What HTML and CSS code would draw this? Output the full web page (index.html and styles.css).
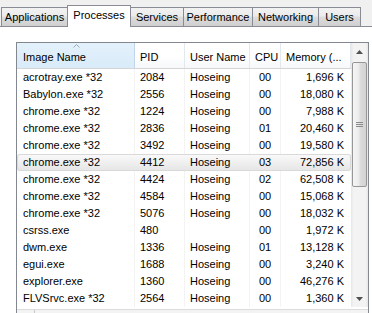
FILE: index.html
```html
<!DOCTYPE html>
<html>
<head>
    <meta charset="utf-8">
    <title>Windows Task Manager - Processes</title>
    <link rel="stylesheet" href="styles.css">
</head>
<body>

    <div class="tabs">
        <div class="tab t-app">Applications</div>
        <div class="tab t-proc active">Processes</div>
        <div class="tab t-svc">Services</div>
        <div class="tab t-perf">Performance</div>
        <div class="tab t-net">Networking</div>
        <div class="tab t-usr">Users</div>
    </div>

    <div class="list">
        <div class="main">
            <div class="cols">
                <div class="head">
                    <div class="hcell sorted">
                        <svg class="sort" width="7" height="4" viewBox="0 0 7 4"><path d="M0.5 3.5 L3.5 0.5 L6.5 3.5" fill="none" stroke="#9aabbd" stroke-width="1"/></svg>
                        Image Name
                    </div>
                    <div class="hcell">PID</div>
                    <div class="hcell">User Name</div>
                    <div class="hcell">CPU</div>
                    <div class="hcell">Memory (...</div>
                </div>

                <div class="row"><span>acrotray.exe *32</span><span>2084</span><span>Hoseing</span><span class="cpu">00</span><span class="mem">1,696 K</span></div>
                <div class="row"><span>Babylon.exe *32</span><span>2556</span><span>Hoseing</span><span class="cpu">00</span><span class="mem">18,080 K</span></div>
                <div class="row"><span>chrome.exe *32</span><span>1224</span><span>Hoseing</span><span class="cpu">00</span><span class="mem">7,988 K</span></div>
                <div class="row"><span>chrome.exe *32</span><span>2836</span><span>Hoseing</span><span class="cpu">01</span><span class="mem">20,460 K</span></div>
                <div class="row"><span>chrome.exe *32</span><span>3492</span><span>Hoseing</span><span class="cpu">00</span><span class="mem">19,580 K</span></div>
                <div class="row sel"><span>chrome.exe *32</span><span>4412</span><span>Hoseing</span><span class="cpu">03</span><span class="mem">72,856 K</span></div>
                <div class="row"><span>chrome.exe *32</span><span>4424</span><span>Hoseing</span><span class="cpu">02</span><span class="mem">62,508 K</span></div>
                <div class="row"><span>chrome.exe *32</span><span>4584</span><span>Hoseing</span><span class="cpu">00</span><span class="mem">15,068 K</span></div>
                <div class="row"><span>chrome.exe *32</span><span>5076</span><span>Hoseing</span><span class="cpu">00</span><span class="mem">18,032 K</span></div>
                <div class="row"><span>csrss.exe</span><span>480</span><span></span><span class="cpu">00</span><span class="mem">1,972 K</span></div>
                <div class="row"><span>dwm.exe</span><span>1336</span><span>Hoseing</span><span class="cpu">01</span><span class="mem">13,128 K</span></div>
                <div class="row"><span>egui.exe</span><span>1688</span><span>Hoseing</span><span class="cpu">00</span><span class="mem">3,240 K</span></div>
                <div class="row"><span>explorer.exe</span><span>1360</span><span>Hoseing</span><span class="cpu">00</span><span class="mem">46,276 K</span></div>
                <div class="row"><span>FLVSrvc.exe *32</span><span>2564</span><span>Hoseing</span><span class="cpu">00</span><span class="mem">1,360 K</span></div>
            </div>

            <div class="vscroll">
                <div class="sbtn">
                    <svg width="7" height="4" viewBox="0 0 7 4"><path d="M0 4 L3.5 0 L7 4 Z" fill="#505050"/></svg>
                </div>
                <div class="thumb">
                    <svg width="7" height="7" viewBox="0 0 7 7"><path d="M0 1.5 H7 M0 3.5 H7 M0 5.5 H7" stroke="#8a8a8a" stroke-width="1"/></svg>
                </div>
                <div class="sbtn down">
                    <svg width="7" height="4" viewBox="0 0 7 4"><path d="M0 0 L3.5 4 L7 0 Z" fill="#505050"/></svg>
                </div>
            </div>
        </div>

        <div class="hscroll">
            <div class="hbtn"></div>
        </div>
    </div>

</body>
</html>
```

FILE: styles.css
```css
*{
    box-sizing: border-box;
}
body{
    margin: 0;
    width: 372px;
    height: 313px;
    overflow: hidden;
    background-color: #fff;
    font-family: "Liberation Sans", Arial, sans-serif;
    font-size: 11px;
    color: #000;
}
/* tab strip */
.tabs{
    display: flex;
    align-items: flex-end;
    height: 27px;
    padding-left: 1px;
    background-color: #f0f0f0;
    border-bottom: solid 1px #898c95;
}
.tab{
    height: 19px;
    margin-left: -1px;
    border: solid 1px #898c95;
    border-bottom: none;
    background: linear-gradient(#f2f2f2, #ebebeb 45%, #dddddd 50%, #cfcfcf);
    text-align: center;
    line-height: 18px;
    white-space: nowrap;
}
.tab.active{
    height: 22px;
    margin-bottom: -1px;
    background: #fff;
    line-height: 19px;
    position: relative;
    z-index: 1;
}
.t-app{ width: 67px; margin-left: 0; }
.t-proc{ width: 64px; }
.t-svc{ width: 54px; }
.t-perf{ width: 70px; }
.t-net{ width: 67px; }
.t-usr{ width: 43px; }

/* process list */
.list{
    margin: 15px 0 0 16px;
    width: 353px;
    height: 271px;
    border: solid 1px #828790;
    border-bottom: none;
    display: flex;
    flex-direction: column;
    overflow: hidden;
}
.main{
    display: flex;
    flex: none;
}
.cols{
    width: 334px;
}
.head,
.row{
    display: grid;
    grid-template-columns: 118px 50px 65px 31px 70px;
}
.head{
    height: 26px;
    border-bottom: solid 1px #d5d5d5;
    background: linear-gradient(#fff, #fff 50%, #f7f8fa);
}
.hcell{
    padding: 6px 0 0 5px;
    line-height: 17px;
    border-right: solid 1px #e3e8ee;
    white-space: nowrap;
    overflow: hidden;
}
.hcell.sorted{
    padding-left: 6px;
    background: linear-gradient(#e3f1fb, #d9ebf9);
    border-right-color: #c1d6ea;
    position: relative;
}
.sort{
    position: absolute;
    top: 1px;
    left: 56px;
}
.row{
    height: 17px;
    line-height: 17px;
}
.row span{
    padding-left: 5px;
    border-right: solid 1px #f3f3f3;
    white-space: nowrap;
    overflow: hidden;
}
.row span:first-child{
    padding-left: 6px;
}
.row .cpu{
    padding-left: 9px;
}
.row .mem{
    text-align: right;
    padding-right: 7px;
    border-right: none;
}
.row.sel{
    background: linear-gradient(#fafafa, #e5e5e5);
    box-shadow: inset 0 0 0 1px #d9d9d9;
    border-radius: 3px;
}
.row.sel span{
    border-right-color: transparent;
}

/* scroll bars */
.vscroll{
    width: 17px;
    height: 264px;
    display: flex;
    flex-direction: column;
    background: linear-gradient(to right, #e6e6e6, #f3f3f3 15%, #f3f3f3 85%, #e6e6e6);
}
.sbtn{
    height: 17px;
    display: flex;
    align-items: center;
    justify-content: center;
}
.sbtn.down{
    margin-top: auto;
}
.thumb{
    margin: 2px 1px 0 1px;
    height: 125px;
    border: solid 1px #979797;
    border-radius: 2px;
    background: linear-gradient(to right, #f6f6f6, #ebebeb 45%, #dcdcdc 55%, #d3d3d3);
    display: flex;
    align-items: center;
    justify-content: center;
}
.hscroll{
    flex: 1;
    margin-top: 2px;
    border-top: solid 1px #dcdcdc;
    background-color: #f3f3f3;
}
.hbtn{
    width: 18px;
    height: 100%;
    border-right: solid 1px #c9c9c9;
}
```
